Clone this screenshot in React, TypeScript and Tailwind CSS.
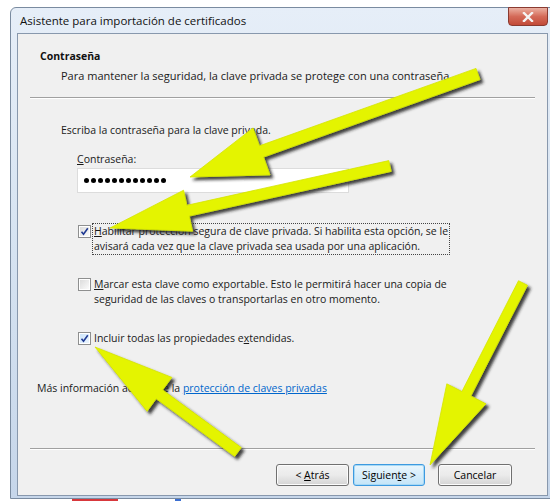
import React from 'react';

type Pt = [number, number];

// Builds the outline of a thick arrow going from tail to tip
function arrowPoints(tail: Pt, tip: Pt, shaft: number, headLen: number, headW: number) {
  const dx = tip[0] - tail[0];
  const dy = tip[1] - tail[1];
  const len = Math.hypot(dx, dy);
  const ux = dx / len;
  const uy = dy / len;
  const nx = -uy;
  const ny = ux;
  const bx = tip[0] - ux * headLen;
  const by = tip[1] - uy * headLen;
  const pts: Pt[] = [
    [tail[0] + (nx * shaft) / 2, tail[1] + (ny * shaft) / 2],
    [bx + (nx * shaft) / 2, by + (ny * shaft) / 2],
    [bx + (nx * headW) / 2, by + (ny * headW) / 2],
    tip,
    [bx - (nx * headW) / 2, by - (ny * headW) / 2],
    [bx - (nx * shaft) / 2, by - (ny * shaft) / 2],
    [tail[0] - (nx * shaft) / 2, tail[1] - (ny * shaft) / 2],
  ];
  return pts.map((p) => `${p[0].toFixed(1)},${p[1].toFixed(1)}`).join(' ');
}

const arrows = [
  { tail: [478, 74] as Pt, tip: [190, 177] as Pt, shaft: 12, headLen: 76, headW: 50 },
  { tail: [390, 166] as Pt, tip: [110, 228] as Pt, shaft: 11, headLen: 80, headW: 42 },
  { tail: [238, 452] as Pt, tip: [95, 347] as Pt, shaft: 11, headLen: 80, headW: 42 },
  { tail: [523, 283] as Pt, tip: [430, 465] as Pt, shaft: 10, headLen: 80, headW: 44 },
];

const Checkbox = ({ checked, tinted }: { checked: boolean; tinted?: boolean }) => (
  <div className="w-[13px] h-[13px] shrink-0 border border-[#8e8f8f] bg-white p-[1px]">
    <div
      className={`w-full h-full flex items-center justify-center ${
        tinted ? 'bg-gradient-to-br from-[#cfe6fb] to-[#eaf4fd]' : 'bg-gradient-to-br from-[#dcdcdc] to-[#fbfbfb]'
      }`}
    >
      {checked && (
        <svg width="9" height="9" viewBox="0 0 9 9">
          <path d="M1.5 4.8 L3.5 7.2 L7.8 1.2" fill="none" stroke="#1f3a93" strokeWidth="1.6" />
        </svg>
      )}
    </div>
  </div>
);

const Button = ({ children, focused }: { children: React.ReactNode; focused?: boolean }) => (
  <div
    className={`h-[22px] rounded-[3px] border flex items-center justify-center text-[10.5px] text-black ${
      focused
        ? 'border-[#3d9ae0] bg-gradient-to-b from-[#eaf6fd] to-[#c4e5f8] shadow-[inset_0_0_0_1px_#a7d9f5]'
        : 'border-[#707070] bg-gradient-to-b from-[#f2f2f2] via-[#ebebeb] to-[#d4d4d4] shadow-[inset_0_0_0_1px_#fcfcfc]'
    }`}
  >
    <span className="whitespace-pre">{children}</span>
  </div>
);

export default function App() {
  return (
    <div className="relative w-[550px] h-[501px] overflow-hidden bg-white font-['Open_Sans',sans-serif] text-[10.5px] leading-[15px] text-[#1a1a1a]">
      {/* window frame */}
      <div className="ml-[10px] mt-[7px] w-[545px] h-[492px] rounded-tl-[6px] border border-[#7a8ba0] bg-gradient-to-b from-[#e6eef8] via-[#d6e3f1] to-[#c6d6ea] px-[6px] pb-[2px] flex flex-col">
        <div className="relative h-[25px] shrink-0 flex items-center pl-[3px]">
          <span className="text-[11.5px] text-[#111]">Asistente para importación de certificados</span>
          <div className="absolute right-0 -top-[1px] w-[40px] h-[19px] rounded-b-[4px] border border-[#8a3a30] bg-gradient-to-b from-[#eab0a2] via-[#d46a58] to-[#c24a38] flex items-center justify-center">
            <svg width="12" height="10" viewBox="0 0 12 10">
              <path d="M2 1 L10 9 M10 1 L2 9" stroke="#f5f5f5" strokeWidth="2.4" strokeLinecap="square" />
            </svg>
          </div>
        </div>

        {/* client area */}
        <div className="flex-1 border border-[#8898ad] bg-[#f0f0f0] flex flex-col">
          <div className="pl-[22px] pt-[15px] font-bold text-[#111]">Contraseña</div>
          <div className="pl-[43px] mt-[4px] text-[11px]">
            Para mantener la seguridad, la clave privada se protege con una contraseña.
          </div>
          <div className="mx-[12px] mt-[14px] h-[2px] border-t border-[#a0a0a0] border-b border-b-white" />

          <div className="pl-[43px] mt-[24px]">Escriba la contraseña para la clave privada.</div>
          <div className="pl-[59px] mt-[14px]">
            <u>C</u>ontraseña:
          </div>
          <div className="ml-[59px] mt-[1px] w-[272px] h-[25px] border border-[#dcdcdc] bg-white flex items-center gap-[2px] pl-[6px]">
            {Array.from({ length: 12 }).map((_, i) => (
              <span key={i} className="w-[5px] h-[5px] rounded-full bg-black" />
            ))}
          </div>

          <div className="ml-[60px] mt-[30px] flex items-start gap-[1px]">
            <div className="mt-[2px]">
              <Checkbox checked />
            </div>
            <div className="border border-dotted border-[#444] px-[1px] whitespace-nowrap">
              <u>H</u>abilitar protección segura de clave privada. Si habilita esta opción, se le
              <br />
              avisará cada vez que la clave privada sea usada por una aplicación.
            </div>
          </div>

          <div className="ml-[60px] mt-[22px] flex items-start gap-[3px]">
            <div className="mt-[1px]">
              <Checkbox checked={false} />
            </div>
            <div className="whitespace-nowrap">
              <u>M</u>arcar esta clave como exportable. Esto le permitirá hacer una copia de
              <br />
              seguridad de las claves o transportarlas en otro momento.
            </div>
          </div>

          <div className="ml-[60px] mt-[24px] flex items-start gap-[3px]">
            <div className="mt-[1px]">
              <Checkbox checked tinted />
            </div>
            <div className="whitespace-nowrap">
              Incluir todas las propiedades e<u>x</u>tendidas.
            </div>
          </div>

          <div className="pl-[19px] mt-[35px] whitespace-nowrap">
            Más información acerca de la{' '}
            <span className="text-[#0066cc] underline">protección de claves privadas</span>
          </div>

          <div className="mx-[12px] mt-[52px] h-[2px] border-t border-[#a0a0a0] border-b border-b-white" />

          <div className="mt-[14px] flex items-center gap-[4px] pl-[258px]">
            <div className="w-[73px]">
              <Button>
                {'< '}
                <u>A</u>trás
              </Button>
            </div>
            <div className="w-[72px]">
              <Button focused>
                Siguien<u>t</u>e{' >'}
              </Button>
            </div>
            <div className="w-[74px] ml-[9px]">
              <Button>Cancelar</Button>
            </div>
          </div>
        </div>
      </div>

      {/* taskbar glimpse under the window */}
      <div className="flex h-[2px]">
        <div className="w-[72px]" />
        <div className="w-[46px] bg-[#d8383c]" />
        <div className="w-[57px]" />
        <div className="w-[6px] bg-[#3b6fd1]" />
      </div>

      {/* highlight arrows */}
      <svg className="absolute inset-0 pointer-events-none" width="550" height="501">
        <defs>
          <filter id="arrowShadow" x="-20%" y="-20%" width="140%" height="140%">
            <feDropShadow dx="3" dy="3" stdDeviation="1.8" floodColor="#1e1e1e" floodOpacity="0.85" />
          </filter>
        </defs>
        {arrows.map((a, i) => (
          <polygon
            key={i}
            points={arrowPoints(a.tail, a.tip, a.shaft, a.headLen, a.headW)}
            fill="#e4f400"
            stroke="#d4e400"
            strokeWidth="0.8"
            strokeLinejoin="round"
            filter="url(#arrowShadow)"
          />
        ))}
      </svg>
    </div>
  );
}
